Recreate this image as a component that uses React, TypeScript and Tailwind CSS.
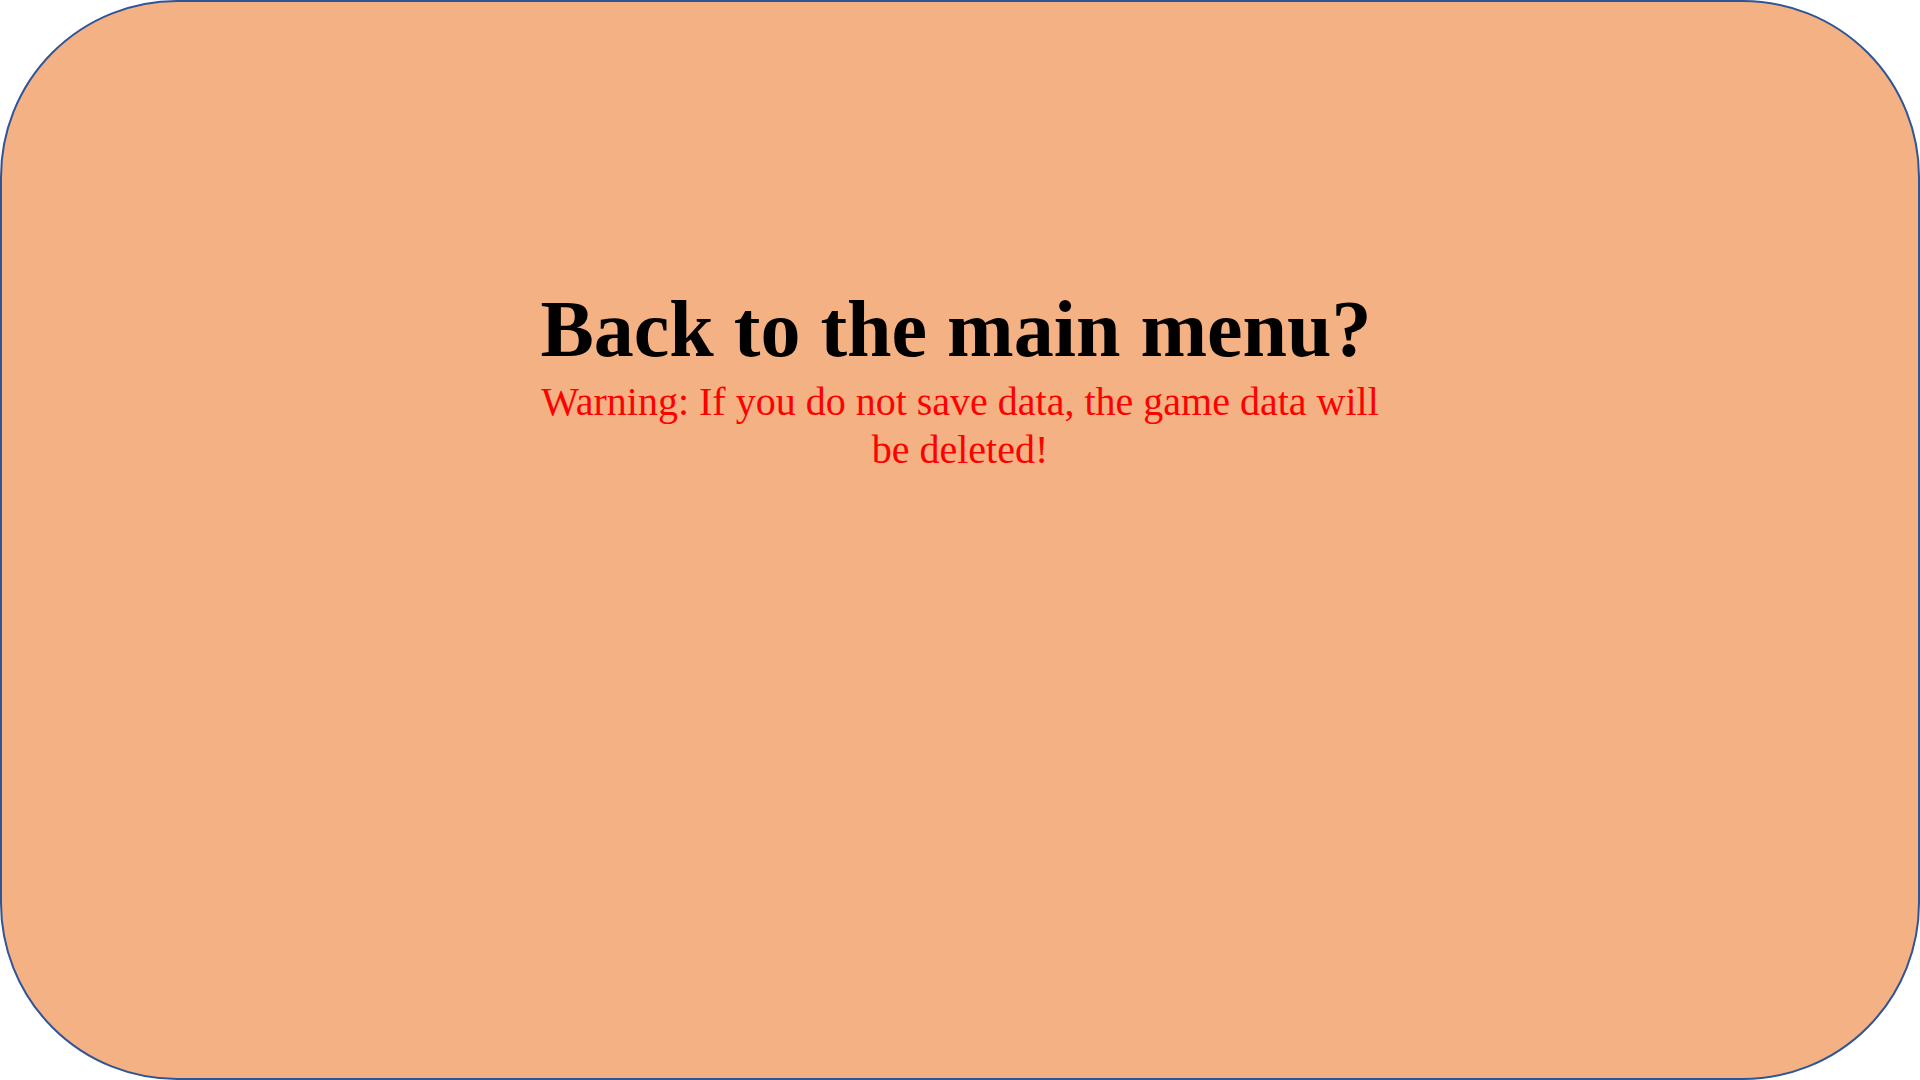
export default function App() {
  return (
    <div className="h-[1080px] w-[1920px] bg-white">
      <div className="flex h-full w-full flex-col items-center rounded-[177px] border-2 border-[#2f5597] bg-[#f4b183] pt-[281px] font-['Liberation_Serif',serif]">
        <h1 className="pr-[8px] text-[80px] leading-[92px] font-bold text-black">
          Back to the main menu?
        </h1>
        <p className="mt-[3px] w-[860px] text-center text-[40px] leading-[48px] text-[#ff0000]">
          Warning: If you do not save data, the game data will be deleted!
        </p>
      </div>
    </div>
  )
}
